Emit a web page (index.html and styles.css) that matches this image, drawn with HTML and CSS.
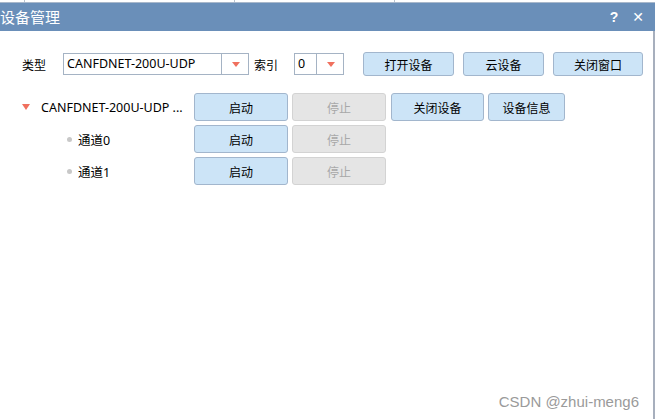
FILE: index.html
```html
<!DOCTYPE html>
<html lang="zh-CN">
  <head>
    <meta charset="utf-8" />
    <title>设备管理</title>
    <link rel="stylesheet" href="styles.css">
  </head>
  <body>
    <div class="topstrip">
      <span class="tick tick-a"></span>
      <span class="tick tick-b"></span>
      <span class="tick tick-c"></span>
    </div>
    <div class="titlebar">
      <span class="title">设备管理</span>
      <span class="tb-help">?</span>
      <span class="tb-close">✕</span>
    </div>

    <div class="content">
      <div class="toolbar">
        <span class="label">类型</span>
        <div class="combo combo-type">
          <span class="combo-text">CANFDNET-200U-UDP</span>
          <span class="combo-arrow"></span>
        </div>
        <span class="label label-index">索引</span>
        <div class="combo combo-index">
          <span class="combo-text">0</span>
          <span class="combo-arrow"></span>
        </div>
        <button class="btn btn-open">打开设备</button>
        <button class="btn btn-cloud">云设备</button>
        <button class="btn btn-closewin">关闭窗口</button>
      </div>

      <div class="tree">
        <div class="tree-row">
          <div class="node node-root">
            <span class="expander"></span>
            <span class="node-text">CANFDNET-200U-UDP ...</span>
          </div>
          <button class="btn btn-row">启动</button>
          <button class="btn btn-row" disabled>停止</button>
          <button class="btn btn-row btn-closedev">关闭设备</button>
          <button class="btn btn-row btn-info">设备信息</button>
        </div>
        <div class="tree-row">
          <div class="node node-child">
            <span class="bullet"></span>
            <span class="node-text">通道0</span>
          </div>
          <button class="btn btn-row">启动</button>
          <button class="btn btn-row" disabled>停止</button>
        </div>
        <div class="tree-row">
          <div class="node node-child">
            <span class="bullet"></span>
            <span class="node-text">通道1</span>
          </div>
          <button class="btn btn-row">启动</button>
          <button class="btn btn-row" disabled>停止</button>
        </div>
      </div>

      <div class="watermark">CSDN @zhui-meng6</div>
    </div>
  </body>
</html>
```
FILE: styles.css
```css
html,
body {
  margin: 0;
  height: 100%;
  background: #ffffff;
  font-family: "Noto Sans", "Noto Sans CJK SC", sans-serif;
  font-size: 12px;
  color: #000;
  overflow: hidden;
}

.topstrip {
  position: relative;
  height: 2px;
  border-bottom: 1px solid #a9b8cb;
  width: 655px;
}

.tick {
  position: absolute;
  top: 0;
  width: 1px;
  height: 2px;
  background: #b9c3cf;
}

.tick-a { left: 24px; }
.tick-b { left: 234px; }
.tick-c { left: 394px; }

.titlebar {
  display: flex;
  align-items: center;
  width: 655px;
  height: 28px;
  background-color: #6a8fb9;
  color: #ffffff;
}

.title {
  flex: 1;
  font-family: "Noto Sans CJK SC", sans-serif;
  font-size: 15px;
  line-height: 28px;
}

.tb-help {
  font-family: "Liberation Sans", sans-serif;
  font-weight: bold;
  font-size: 14px;
  margin-right: 14px;
}

.tb-close {
  font-family: "DejaVu Sans", sans-serif;
  font-weight: bold;
  font-size: 14px;
  margin-right: 11px;
}

.content {
  position: relative;
  width: 653px;
  height: 388px;
  border-right: 2px solid #a7afbd;
}

.toolbar {
  display: flex;
  align-items: center;
  padding: 21px 0 0 22px;
  height: 24px;
}

.label {
  font-family: "Noto Sans CJK SC", sans-serif;
  font-size: 12px;
  margin-right: 17px;
}

.label-index {
  margin-left: 5px;
  margin-right: 16px;
}

.combo {
  display: flex;
  height: 20px;
  border: 1px solid #a5b3c4;
}

.combo-type {
  width: 184px;
}

.combo-index {
  width: 48px;
}

.combo-text {
  flex: 1;
  padding-left: 3px;
  line-height: 20px;
  font-size: 12.5px;
}

.combo-arrow {
  position: relative;
  width: 26px;
  border-left: 1px solid #a5b3c4;
}

.combo-arrow::after {
  content: "";
  position: absolute;
  left: 10px;
  top: 8px;
  border-width: 5px 4px 0 4px;
  border-style: solid;
  border-color: #f0705e transparent transparent transparent;
}

.btn {
  box-sizing: border-box;
  height: 24px;
  padding: 0;
  background-color: #cce4f7;
  border: 1px solid #a2b6cd;
  border-radius: 3px;
  font-family: "Noto Sans CJK SC", sans-serif;
  font-size: 12px;
  color: #000;
}

.btn-open {
  width: 91px;
  margin-left: 19px;
}

.btn-cloud {
  width: 81px;
  margin-left: 9px;
}

.btn-closewin {
  width: 90px;
  margin-left: 9px;
}

.tree {
  display: flex;
  flex-direction: column;
  gap: 4px;
  margin-top: 17px;
}

.tree-row {
  display: flex;
  align-items: center;
  gap: 4px;
  height: 28px;
}

.node {
  display: flex;
  align-items: center;
  width: 194px;
  margin-right: -4px;
}

.node-root {
  padding-left: 22px;
  box-sizing: border-box;
}

.expander {
  width: 0;
  height: 0;
  margin-right: 11px;
  border-width: 6px 4px 0 4px;
  border-style: solid;
  border-color: #f0705e transparent transparent transparent;
}

.node-child {
  padding-left: 67px;
  box-sizing: border-box;
}

.bullet {
  width: 5px;
  height: 5px;
  border-radius: 50%;
  background: #c8c8c8;
  margin-right: 6px;
}

.node-text {
  font-family: "Noto Sans", "Noto Sans CJK SC", sans-serif;
  font-size: 12.5px;
}

.btn-row {
  width: 94px;
  height: 28px;
}

.btn-row:disabled {
  background-color: #e5e5e5;
  border-color: #d3d3d3;
  color: #a8a8a8;
}

.btn-closedev {
  width: 93px;
  margin-left: 1px;
}

.btn-info {
  width: 77px;
}

.watermark {
  position: absolute;
  right: 14px;
  bottom: 9px;
  font-family: "Liberation Sans", sans-serif;
  font-size: 15px;
  color: #9a9a9a;
}
```
